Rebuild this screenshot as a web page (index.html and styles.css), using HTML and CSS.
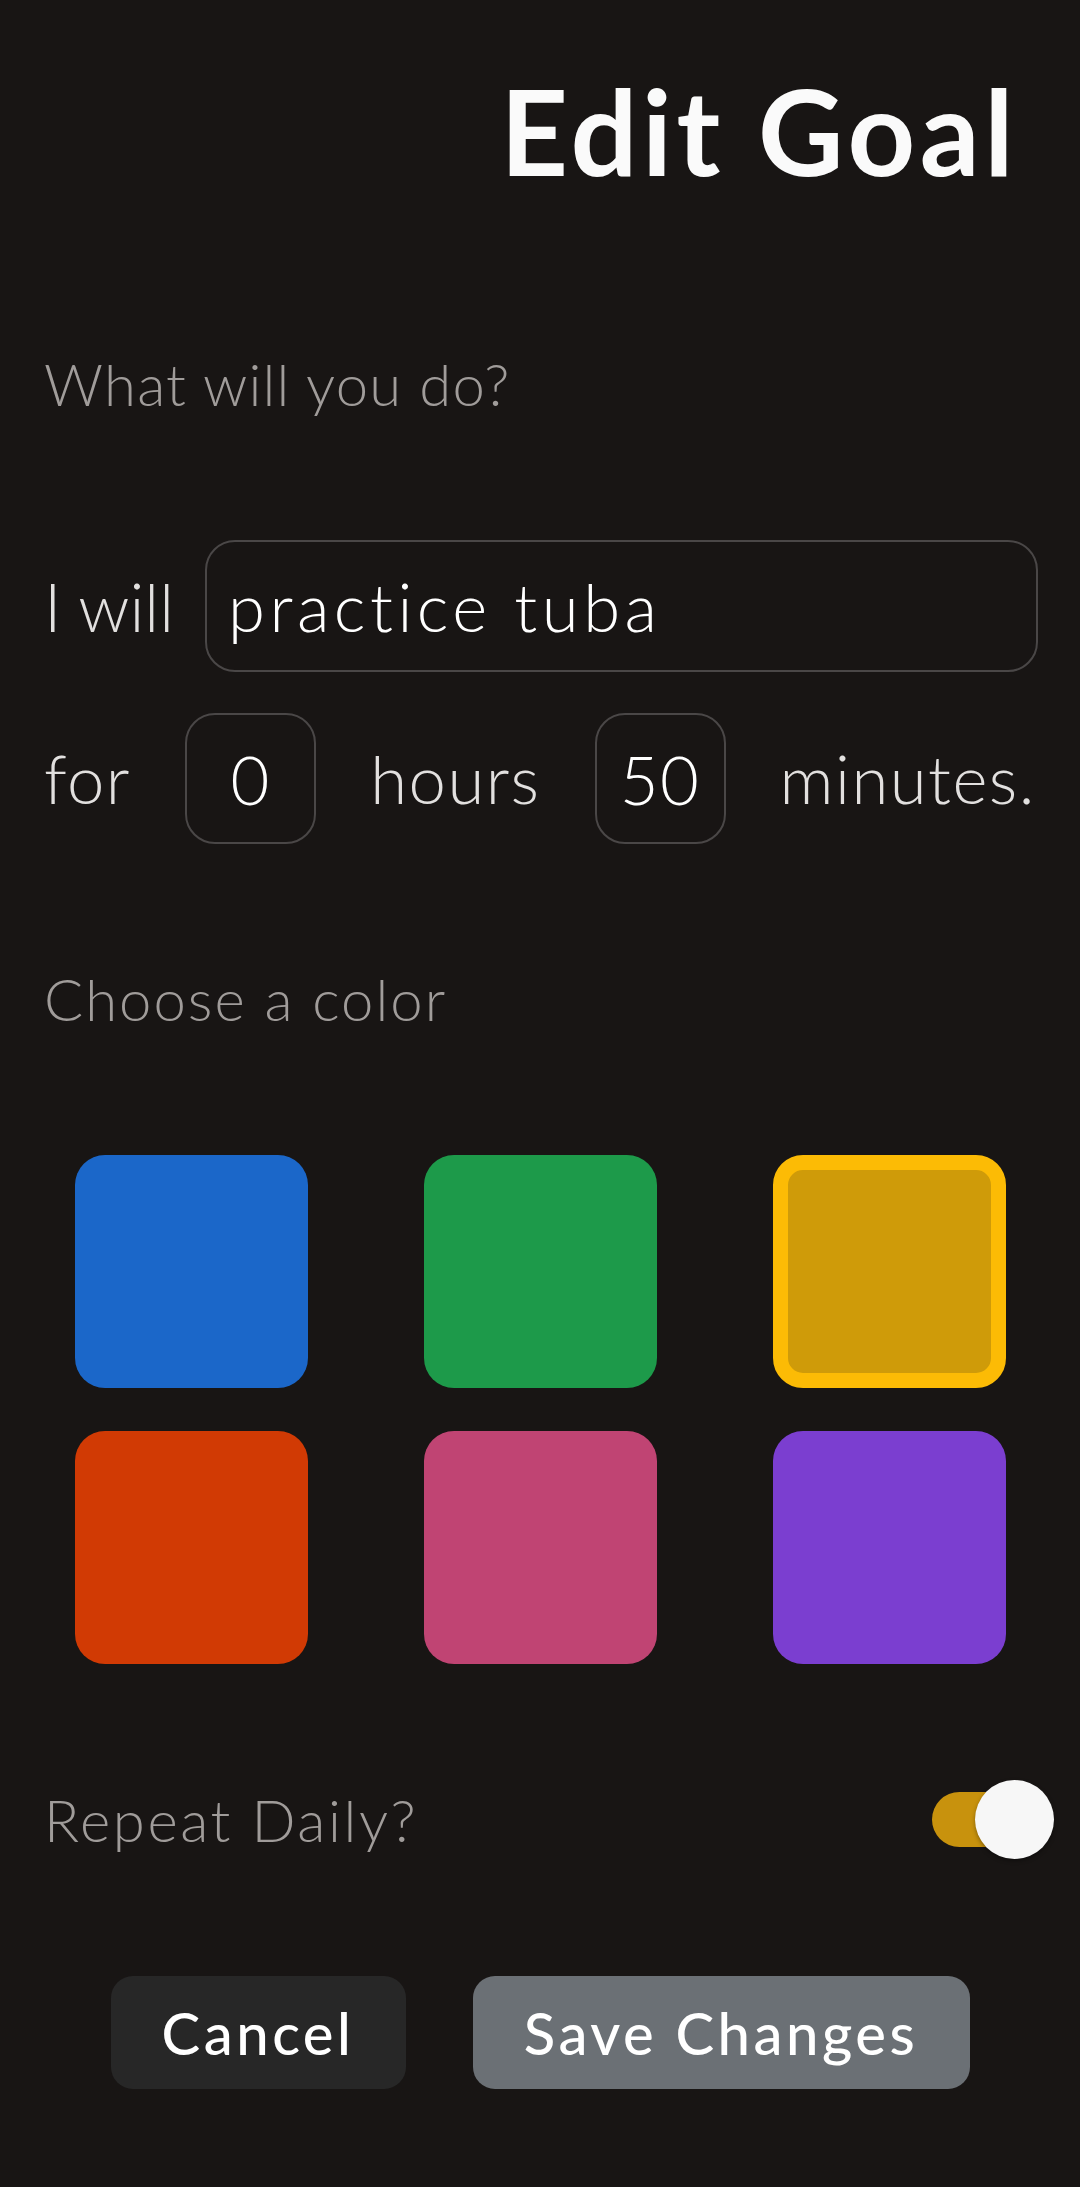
FILE: index.html
```html
<!DOCTYPE html>
<html lang="en">
<head>
<meta charset="utf-8">
<title>Edit Goal</title>
<link rel="stylesheet" href="styles.css">
</head>
<body>
<main class="screen">
  <h1 class="title">Edit Goal</h1>

  <p class="label label-first">What will you do?</p>

  <div class="row row-will">
    <span class="word word-will">I will</span>
    <div class="field field-wide">practice tuba</div>
  </div>

  <div class="row row-time">
    <span class="word">for</span>
    <div class="field field-num">0</div>
    <span class="word">hours</span>
    <div class="field field-num">50</div>
    <span class="word">minutes.</span>
  </div>

  <p class="label label-color">Choose a color</p>

  <div class="swatches">
    <div class="swatch swatch-blue"></div>
    <div class="swatch swatch-green"></div>
    <div class="swatch swatch-yellow selected"></div>
    <div class="swatch swatch-orange"></div>
    <div class="swatch swatch-pink"></div>
    <div class="swatch swatch-purple"></div>
  </div>

  <div class="repeat">
    <span class="label label-inline">Repeat Daily?</span>
    <div class="toggle">
      <div class="toggle-track"></div>
      <div class="toggle-thumb"></div>
    </div>
  </div>

  <div class="actions">
    <button class="btn btn-cancel">Cancel</button>
    <button class="btn btn-save">Save Changes</button>
  </div>
</main>
</body>
</html>
```

FILE: styles.css
```css
* { box-sizing: border-box; }

html, body {
  margin: 0;
  padding: 0;
  background: #181514;
}

body {
  font-family: "Lato", "Inter", "Liberation Sans", sans-serif;
  color: #ffffff;
  width: 1080px;
  min-height: 2187px;
}

.screen {
  padding: 72px 44px 0 44px;
}

.title {
  margin: 0;
  font-size: 118px;
  line-height: 1;
  font-weight: 700;
  text-align: right;
  padding-right: 18px;
  color: #fafafa;
  letter-spacing: 4.5px;
}

.label {
  margin: 0;
  font-size: 58px;
  line-height: 1;
  font-weight: 300;
  color: #a09c9a;
  letter-spacing: 2px;
}

.label-first {
  margin-top: 165px;
  letter-spacing: 1.2px;
}

.row {
  display: flex;
  align-items: center;
}

.row-will {
  margin-top: 127px;
  gap: 31px;
  margin-right: -2px;
}

.row-time {
  margin-top: 41px;
  justify-content: space-between;
}

.word {
  font-size: 67px;
  line-height: 1;
  font-weight: 300;
  color: #e2e0df;
  letter-spacing: 1.5px;
}

.word-will { letter-spacing: 0; }

.field {
  border: 2px solid #4a4747;
  border-radius: 30px;
  font-size: 67px;
  font-weight: 300;
  color: #ffffff;
  display: flex;
  align-items: center;
}

.field-wide {
  flex: 1;
  height: 132px;
  padding-left: 21px;
  letter-spacing: 4.5px;
}

.field-num {
  width: 131px;
  height: 131px;
  justify-content: center;
  letter-spacing: 1.5px;
}

.label-color { margin-top: 126px; }

.swatches {
  margin-top: 127px;
  display: grid;
  grid-template-columns: repeat(3, 233px);
  column-gap: 116px;
  row-gap: 43px;
  justify-content: center;
}

.swatch {
  width: 233px;
  height: 233px;
  border-radius: 30px;
}

.swatch-blue { background: #1b67c9; }
.swatch-green { background: #1d9a4a; }
.swatch-yellow { background: #cf9b09; }
.swatch-orange { background: #d13a04; }
.swatch-pink { background: #c04473; }
.swatch-purple { background: #7b3ed0; }

.swatch.selected {
  border: 15px solid #fcbb05;
}

.repeat {
  margin-top: 116px;
  display: flex;
  align-items: center;
  justify-content: space-between;
  height: 79px;
}

.label-inline {
  display: block;
  letter-spacing: 2.6px;
}

.toggle {
  position: relative;
  width: 122px;
  height: 79px;
  margin-right: -18px;
}

.toggle-track {
  position: absolute;
  left: 0;
  top: 12px;
  width: 90px;
  height: 55px;
  border-radius: 28px;
  background: #c8920d;
}

.toggle-thumb {
  position: absolute;
  right: 0;
  top: 0;
  width: 79px;
  height: 79px;
  border-radius: 50%;
  background: #f7f7f7;
  box-shadow: 0 2px 4px rgba(0, 0, 0, 0.35);
}

.actions {
  margin-top: 117px;
  display: flex;
  justify-content: center;
  gap: 67px;
}

.btn {
  border: none;
  height: 113px;
  border-radius: 22px;
  font-family: "Lato", "Inter", "Liberation Sans", sans-serif;
  font-size: 58px;
  font-weight: 500;
  color: #ffffff;
  padding: 0;
  letter-spacing: 3.5px;
}

.btn-cancel {
  width: 295px;
  background: #272727;
}

.btn-save {
  width: 497px;
  background: #6b7075;
}
```
